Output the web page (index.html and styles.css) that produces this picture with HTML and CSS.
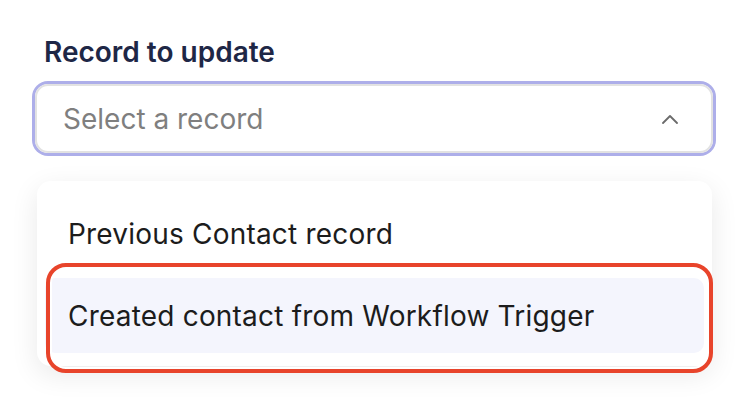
FILE: index.html
```html
<!DOCTYPE html>
<html lang="en">
<head>
    <meta charset="UTF-8">
    <meta name="viewport" content="width=device-width, initial-scale=1.0">
    <title>Record to update</title>
    <link rel="stylesheet" href="styles.css">
</head>
<body>
    <div class="field">
        <label class="field-label" for="recordSelect">Record to update</label>
        <div class="select-box" id="recordSelect">
            <span class="placeholder">Select a record</span>
            <svg class="chevron" width="16" height="10" viewBox="0 0 16 10">
                <polyline points="1,9 8,2 15,9" fill="none" stroke="#6b6b6b" stroke-width="1.8" stroke-linecap="round" stroke-linejoin="round"/>
            </svg>
        </div>

        <div class="dropdown">
            <div class="option">Previous Contact record</div>
            <div class="option active">Created contact from Workflow Trigger</div>
            <!-- annotation around the selected option -->
            <div class="highlight-frame"></div>
        </div>
    </div>
</body>
</html>
```

FILE: styles.css
```css
html, body {
    min-height: 408px;
}
body {
    margin: 0;
    background: #fff;
    font-family: Inter, "Noto Sans", sans-serif;
}
.field {
    padding: 35px 0 40px 35px;
    width: 678px;
}
.field-label {
    display: block;
    padding-left: 9px;
    font-size: 28px;
    line-height: 34px;
    font-weight: 600;
    color: #1e2746;
}
.select-box {
    margin-top: 15px;
    height: 69px;
    box-sizing: border-box;
    border: 2px solid #e2e2e2;
    border-radius: 13px;
    box-shadow: 0 0 0 3px #adaee9;
    display: flex;
    align-items: center;
    justify-content: space-between;
    padding: 0 33px 0 26px;
}
.placeholder {
    font-size: 28px;
    color: #7f7f7f;
}
.chevron {
    display: block;
}
.dropdown {
    position: relative;
    margin: 28px 0 0 2px;
    width: 675px;
    box-sizing: border-box;
    padding: 15px 8px 13px;
    border-radius: 14px;
    background: #fff;
    box-shadow: 0 8px 28px rgba(0, 0, 0, 0.09);
    display: flex;
    flex-direction: column;
    gap: 7px;
}
.option {
    height: 75px;
    display: flex;
    align-items: center;
    padding-left: 23px;
    border-radius: 10px;
    font-size: 28px;
    font-weight: 400;
    letter-spacing: 0.2px;
    color: #1c1c1c;
}
.option.active {
    background: #f4f5fd;
}
.highlight-frame {
    position: absolute;
    left: 9px;
    top: 82px;
    width: 667px;
    height: 110px;
    box-sizing: border-box;
    border: 4px solid #e8442b;
    border-radius: 20px;
    box-shadow: inset 0 0 0 2px #fff;
}
```
